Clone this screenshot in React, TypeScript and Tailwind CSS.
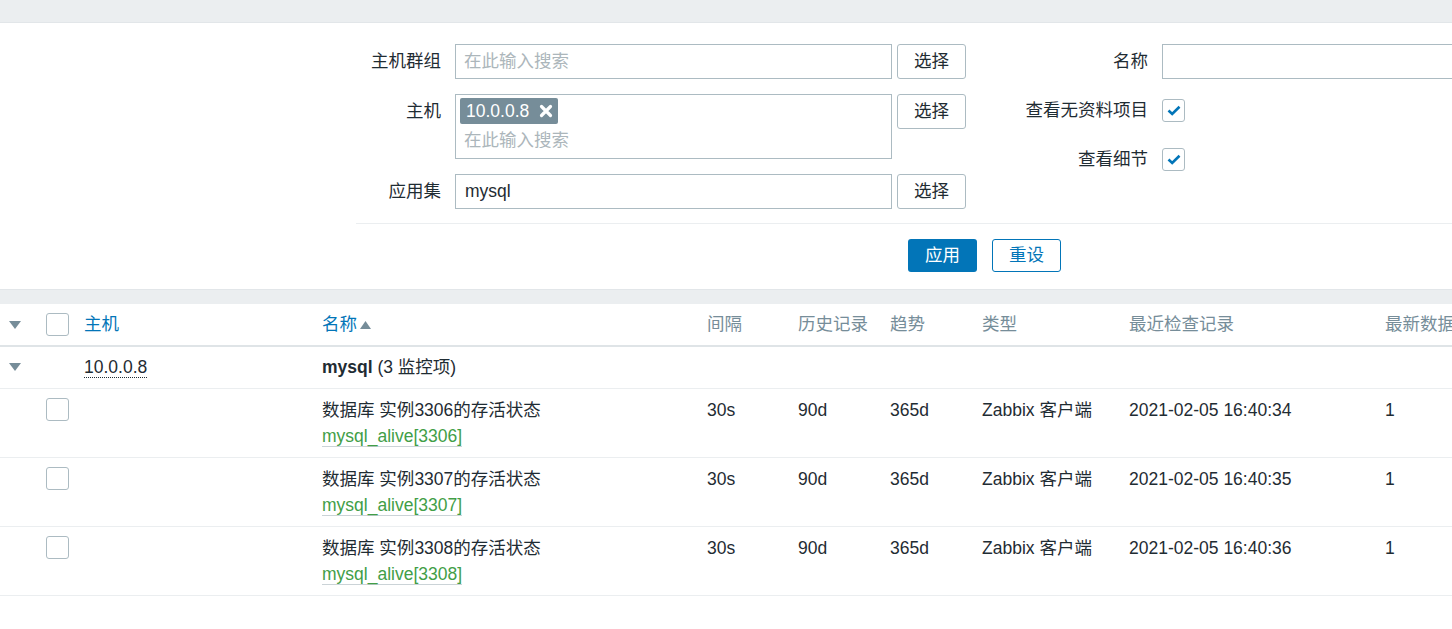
import React from "react";

const cols =
  "grid grid-cols-[38px_38px_238px_385px_91px_92px_92px_147px_256px_1fr]";

function Checkbox({ checked = false }: { checked?: boolean }) {
  return (
    <div className="w-[23px] h-[23px] border border-[#acbbc2] rounded-[3px] bg-white flex items-center justify-center">
      {checked && (
        <svg width="14" height="11" viewBox="0 0 14 11">
          <path d="M1.5 5.5 5.2 9 12.5 1.8" fill="none" stroke="#0275b8" strokeWidth="2.6" />
        </svg>
      )}
    </div>
  );
}

function DownTri() {
  return (
    <svg width="12" height="8" viewBox="0 0 12 8">
      <path d="M0 0h12L6 8z" fill="#768d99" />
    </svg>
  );
}

function SelectBtn() {
  return (
    <button className="w-[69px] h-[35px] border border-[#acbbc2] rounded-[3px] bg-white text-[#1f2c33] text-[17.5px]">
      选择
    </button>
  );
}

const items = [
  { port: "3306", time: "2021-02-05 16:40:34" },
  { port: "3307", time: "2021-02-05 16:40:35" },
  { port: "3308", time: "2021-02-05 16:40:36" },
];

export default function App() {
  return (
    <div className="w-[1452px] h-[629px] overflow-hidden bg-white text-[#1f2c33] text-[17.5px] font-['Liberation_Sans','Noto_Sans_CJK_SC',Arial,sans-serif]">
      {/* top band */}
      <div className="h-[23px] bg-[#ebeef0] border-b border-[#e2e6e9]" />

      {/* Filter */}
      <div className="pl-[356px] pt-[21px]">
        <div className="flex">
          {/* left column */}
          <div className="flex flex-col">
            <div className="flex items-center">
              <div className="w-[85px] text-right">主机群组</div>
              <div className="ml-[14px] w-[437px] h-[35px] border border-[#acbbc2] flex items-center pl-[8px] text-[#acb6bb]">
                在此输入搜索
              </div>
              <div className="ml-[5px]">
                <SelectBtn />
              </div>
            </div>
            <div className="flex items-start mt-[15px]">
              <div className="w-[85px] h-[35px] flex items-center justify-end">主机</div>
              <div className="ml-[14px] w-[437px] h-[65px] border border-[#acbbc2] pt-[3px] pl-[4px]">
                <div className="inline-flex items-center h-[26px] bg-[#768d99] rounded-[2px] text-white pl-[6px] pr-[5px] gap-[10px]">
                  <span>10.0.0.8</span>
                  <svg width="14" height="14" viewBox="0 0 14 14">
                    <path d="M2.5 2.5l9 9M11.5 2.5l-9 9" stroke="white" strokeWidth="3.2" strokeLinecap="round" />
                  </svg>
                </div>
                <div className="mt-[3px] pl-[4px] leading-[26px] text-[#acb6bb]">在此输入搜索</div>
              </div>
              <div className="ml-[5px]">
                <SelectBtn />
              </div>
            </div>
            <div className="flex items-center mt-[15px]">
              <div className="w-[85px] text-right">应用集</div>
              <div className="ml-[14px] w-[437px] h-[35px] border border-[#acbbc2] flex items-center pl-[9px]">
                mysql
              </div>
              <div className="ml-[5px]">
                <SelectBtn />
              </div>
            </div>
          </div>

          {/* right column */}
          <div className="flex flex-col">
            <div className="flex items-center h-[35px]">
              <div className="w-[182px] text-right">名称</div>
              <div className="ml-[14px] w-[400px] h-[35px] border border-[#acbbc2]" />
            </div>
            <div className="flex items-center h-[33px] mt-[15px]">
              <div className="w-[182px] text-right">查看无资料项目</div>
              <div className="ml-[14px]">
                <Checkbox checked />
              </div>
            </div>
            <div className="flex items-center h-[33px] mt-[16px]">
              <div className="w-[182px] text-right">查看细节</div>
              <div className="ml-[14px]">
                <Checkbox checked />
              </div>
            </div>
          </div>
        </div>

        <div className="mt-[14px] border-t border-[#ebeef0] pt-[15px] pb-[17px] flex gap-[15px] pl-[552px]">
          <button className="w-[69px] h-[33px] rounded-[3px] bg-[#0275b8] text-white">应用</button>
          <button className="w-[69px] h-[33px] rounded-[3px] border border-[#0275b8] bg-white text-[#0275b8]">
            重设
          </button>
        </div>
      </div>

      {/* middle band */}
      <div className="h-[15px] bg-[#ebeef0] border-t border-[#e2e6e9]" />

      {/* Table */}
      <div className={`${cols} h-[43px] items-center border-b-2 border-[#dfe4e7] text-[#768d99]`}>
        <div className="pl-[9px] flex items-center">
          <DownTri />
        </div>
        <div className="pl-2">
          <Checkbox />
        </div>
        <div className="pl-2 text-[#0275b8]">主机</div>
        <div className="pl-2 text-[#0275b8] flex items-center gap-[3px]">
          名称
          <svg width="11" height="8" viewBox="0 0 11 8">
            <path d="M0 8h11L5.5 0z" fill="#768d99" />
          </svg>
        </div>
        <div className="pl-2">间隔</div>
        <div className="pl-2">历史记录</div>
        <div className="pl-2">趋势</div>
        <div className="pl-2">类型</div>
        <div className="pl-2">最近检查记录</div>
        <div className="pl-2 whitespace-nowrap">最新数据</div>
      </div>

      <div className={`${cols} pt-[7px] pb-2 leading-[26px] items-center border-b border-[#ebeef0]`}>
        <div className="pl-[9px] flex items-center">
          <DownTri />
        </div>
        <div />
        <div className="pl-2">
          <span className="border-b border-dotted border-[#1f2c33]">10.0.0.8</span>
        </div>
        <div className="pl-2 whitespace-nowrap">
          <span className="font-bold">mysql</span> (3 监控项)
        </div>
      </div>

      {items.map((it) => (
        <div key={it.port} className={`${cols} pt-2 pb-2 leading-[26px] border-b border-[#ebeef0]`}>
          <div />
          <div className="pl-2 pt-[1px]">
            <Checkbox />
          </div>
          <div />
          <div className="pl-2">
            <div>数据库 实例{it.port}的存活状态</div>
            <div>
              <span className="text-[#429e47] border-b border-[#cbd3d7]">mysql_alive[{it.port}]</span>
            </div>
          </div>
          <div className="pl-2">30s</div>
          <div className="pl-2">90d</div>
          <div className="pl-2">365d</div>
          <div className="pl-2 whitespace-nowrap">Zabbix 客户端</div>
          <div className="pl-2 whitespace-nowrap">{it.time}</div>
          <div className="pl-2">1</div>
        </div>
      ))}
    </div>
  );
}
